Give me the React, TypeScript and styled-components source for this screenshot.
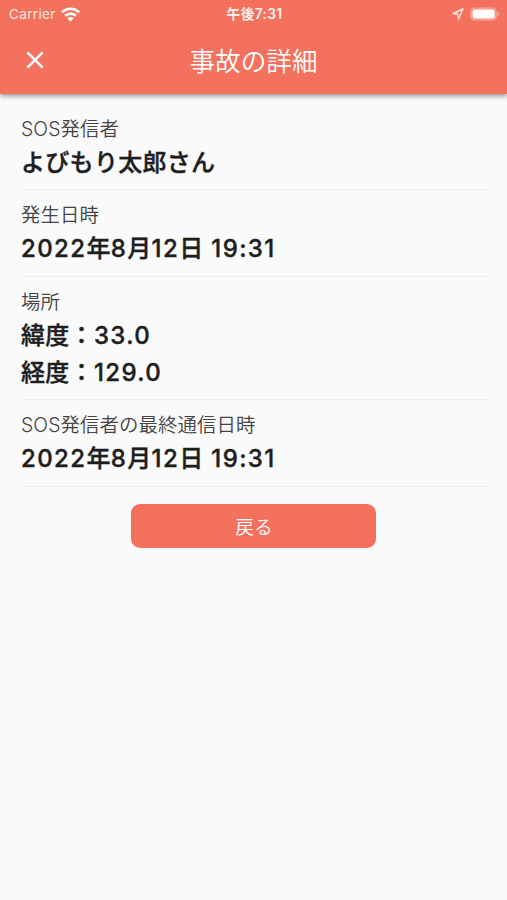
import React from 'react';
import styled, { createGlobalStyle } from 'styled-components';

const coral = '#f4715e';

const GlobalStyle = createGlobalStyle`
  * { box-sizing: border-box; }
  html, body { margin: 0; padding: 0; background: #fafafa; }
  body { font-family: Inter, 'Noto Sans CJK JP', sans-serif; color: #1e1e1e; }
`;

const Screen = styled.div`
  min-height: 900px;
  background: #fafafa;
  overflow: hidden;
`;

const Header = styled.header`
  height: 94px;
  background: ${coral};
  color: #fff;
  box-shadow: 0 2px 5px rgba(0, 0, 0, 0.42);
`;

const StatusBar = styled.div`
  height: 27px;
  display: grid;
  grid-template-columns: 1fr auto 1fr;
  align-items: center;
  padding: 0 7px 0 9px;
`;

const Carrier = styled.div`
  display: flex;
  align-items: center;
  gap: 5px;
  font-size: 13.5px;
  letter-spacing: 0.35px;
  line-height: 28px;
  color: #ffe6e1;
`;

const Clock = styled.div`
  font-size: 13.8px;
  font-weight: 600;
  letter-spacing: 0.3px;
  line-height: 28px;
  white-space: nowrap;
  color: #fff1ee;
`;

const StatusIcons = styled.div`
  display: flex;
  justify-content: flex-end;
  align-items: center;
  gap: 6px;
`;

const TitleBar = styled.div`
  height: 67px;
  display: grid;
  grid-template-columns: 70px 1fr 70px;
  align-items: start;
`;

const CloseButton = styled.button`
  display: flex;
  justify-content: center;
  align-items: center;
  width: 70px;
  height: 66px;
  padding: 0;
  border: 0;
  background: none;
  color: inherit;
`;

const Title = styled.h1`
  margin: 0;
  text-align: center;
  font-size: 25.6px;
  font-weight: 350;
  line-height: 69px;
`;

const Details = styled.main`
  padding: 9.4px 19px 0 21px;
`;

const Section = styled.section`
  padding: 10.3px 0 7.3px;
  border-bottom: 1px solid #efefef;
`;

const Label = styled.div`
  font-size: 19.4px;
  font-weight: 350;
  line-height: 31.2px;
  letter-spacing: 0.1px;
  color: #444;
`;

const Value = styled.div`
  font-size: 24px;
  letter-spacing: 0.3px;
  font-weight: 500;
  -webkit-text-stroke: 0.4px currentColor;
  line-height: 36.8px;
  white-space: nowrap;
`;

const Digits = styled.span`
  letter-spacing: 1.4px;
`;

const BackButton = styled.button`
  display: block;
  width: 245px;
  height: 44px;
  margin: 17px 0 0 131.4px;
  padding: 3px 0 0;
  border: 0;
  border-radius: 9px;
  background: ${coral};
  color: #fff;
  font: inherit;
  font-size: 18.7px;
  font-weight: 350;
  line-height: 41px;
`;

const sections = [
  { label: 'SOS発信者', values: ['よびもり太郎さん'] },
  { label: '発生日時', values: ['2022年8月12日 19:31'] },
  { label: '場所', values: ['緯度：33.0', '経度：129.0'] },
  { label: 'SOS発信者の最終通信日時', values: ['2022年8月12日 19:31'] },
];

// Numerals are tracked more loosely than the Japanese characters around them.
const spaced = (value: string) =>
  value
    .split(/([\d.: ]+)/)
    .map((part, i) => (i % 2 ? <Digits key={i}>{part}</Digits> : part));

const WifiIcon = () => (
  <svg width="19" height="15" viewBox="0 0 19 15" fill="none" stroke="#fff" strokeWidth="2.7">
    <path d="M1 5.2C5.8.6 13.2.6 18 5.2" />
    <path d="M4.1 8.7C7.2 5.8 11.8 5.8 14.9 8.7" />
    <path d="M9.5 14.4 6.4 11.3C8.1 9.7 10.9 9.7 12.6 11.3Z" fill="#fff" stroke="none" />
  </svg>
);

const LocationIcon = () => (
  <svg width="12" height="12" viewBox="0 0 12 12" fill="none" stroke="#ffe6e1" strokeWidth="1.4" strokeLinejoin="round">
    <path d="M10.8 1 1.1 5.5 5.8 6.3 6.6 10.9Z" />
  </svg>
);

const BatteryIcon = () => (
  <svg width="30" height="14" viewBox="0 0 30 14">
    <rect x=".9" y=".9" width="25.4" height="12.2" rx="3.8" fill="#fff" fillOpacity=".2" stroke="#fff" strokeOpacity=".28" strokeWidth="1.4" />
    <rect x="2.6" y="2.4" width="22" height="9.2" rx="2" fill="#fff" />
    <path d="M27.6 5c2 .8 2 3.2 0 4Z" fill="#fff" fillOpacity=".5" />
  </svg>
);

const CloseIcon = () => (
  <svg width="18" height="18" viewBox="0 0 18 18" stroke="#fff" strokeWidth="2.5">
    <path d="M1.3 1.3 16.7 16.7M16.7 1.3 1.3 16.7" />
  </svg>
);

export default function App() {
  return (
    <Screen lang="ja">
      <GlobalStyle />
      <Header>
        <StatusBar>
          <Carrier>Carrier<WifiIcon /></Carrier>
          <Clock>午後7:31</Clock>
          <StatusIcons><LocationIcon /><BatteryIcon /></StatusIcons>
        </StatusBar>
        <TitleBar>
          <CloseButton aria-label="閉じる"><CloseIcon /></CloseButton>
          <Title>事故の詳細</Title>
        </TitleBar>
      </Header>
      <Details>
        {sections.map(({ label, values }) => (
          <Section key={label}>
            <Label>{label}</Label>
            {values.map((value) => (
              <Value key={value}>{spaced(value)}</Value>
            ))}
          </Section>
        ))}
      </Details>
      <BackButton>戻る</BackButton>
    </Screen>
  );
}
